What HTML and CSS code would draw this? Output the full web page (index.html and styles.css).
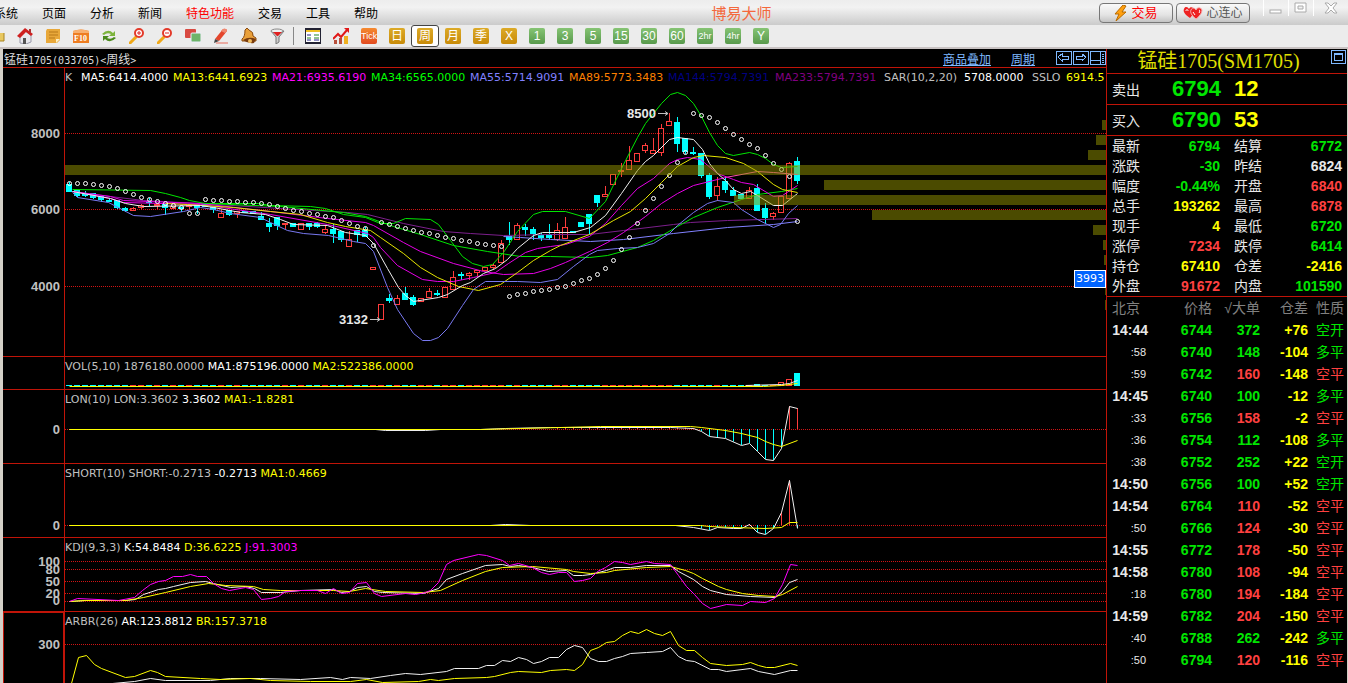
FILE: index.html
```html
<!DOCTYPE html>
<html lang="zh-CN">
<head>
  <meta charset="utf-8">
  <title>博易大师</title>
  <link rel="stylesheet" href="styles.css">
</head>
<body>
  <header class="menubar">
    <nav class="menu">
      <a href="#">系统</a>
      <a href="#">页面</a>
      <a href="#">分析</a>
      <a href="#">新闻</a>
      <a href="#" class="hot">特色功能</a>
      <a href="#">交易</a>
      <a href="#">工具</a>
      <a href="#">帮助</a>
    </nav>
    <h1 class="brand">博易大师</h1>
    <button type="button" class="pill trade">
      <svg width="14" height="16" viewBox="0 0 14 16"><path d="M9 0L1 9h4l-3 7 10-9H8l4-6z" fill="#ffa010" stroke="#b86a00"/></svg>交易
    </button>
    <button type="button" class="pill heart">
      <svg width="20" height="14" viewBox="0 0 20 14"><path d="M7 12C1 8 0 5 1 3c1-3 4-2 5 0 1-3 5-2 5 1 0 3-2 6-4 8z" fill="#e22"/><path d="M13 13C8 9 7 6 8 4c1-3 4-2 5 0 1-3 5-3 6 0 0 3-3 7-6 9z" fill="#e22" stroke="#f6b0b0"/><path d="M3 5c0-2 2-2 2 0M16 4c1 0 1 2 0 3M10 6l2 3" fill="none" stroke="#fff"/></svg>心连心
    </button>
    <div class="window-buttons">
      <button type="button" aria-label="最小化"><svg width="14" height="12" viewBox="0 0 14 12"><rect x="1" y="8" width="11" height="3" fill="#fff" stroke="#aaa"/></svg></button>
      <button type="button" aria-label="最大化"><svg width="14" height="12" viewBox="0 0 14 12"><path d="M1 1h11v9H1zM4 4h5v3H4z" fill="#fff" stroke="#aaa" fill-rule="evenodd"/></svg></button>
      <button type="button" aria-label="关闭"><svg width="14" height="12" viewBox="0 0 14 12"><path d="M1 1h3l3 3 3-3h3L9 6l4 5h-3L7 8l-3 3H1l4-5z" fill="#fff" stroke="#aaa"/></svg></button>
    </div>
  </header>

  <div class="toolbar">
    <button type="button" class="tool cut" aria-label="返回"><svg width="5" height="16" viewBox="0 0 5 16"><path d="M0 5h4v8H0z" fill="#e8c860"/><path d="M4 5v8H0" fill="none" stroke="#a88420"/></svg></button>
    <button type="button" class="tool" aria-label="首页"><svg width="16" height="16" viewBox="0 0 16 16"><path d="M3 8v7l6 1 5-2V7L8 3z" fill="#e9e9ee" stroke="#99a"/><path d="M0 8L8 0l8 6-2 2-5-4-6 6z" fill="#cf2020"/><path d="M12 1h2v4l-2-1z" fill="#a33"/><path d="M6 10h3v6H6z" fill="#555"/></svg></button>
    <button type="button" class="tool" aria-label="公告"><svg width="16" height="16" viewBox="0 0 16 16"><path d="M2 1h13v11l-3 3H1V3z" fill="#e8a83a"/><path d="M4 4h9M4 7h9M4 10h6" stroke="#b87818"/><path d="M15 11h-4v4z" fill="#fff0c0"/></svg></button>
    <button type="button" class="tool" aria-label="F10"><svg width="16" height="16" viewBox="0 0 16 16"><path d="M0 3q8-3 16 0v12H0z" fill="#ee7d22"/><path d="M0 3q8-3 16 0v2H0z" fill="#f8b070"/><text x="1" y="13" class="ico-text">F10</text></svg></button>
    <button type="button" class="tool" aria-label="刷新"><svg width="16" height="16" viewBox="0 0 16 16"><path d="M1 6q6-6 11-1l2-2v5H8l2-2Q6 4 3 7z" fill="#7cb43c"/><path d="M15 10q-6 6-11 1l-2 2V8h6l-2 2q4 2 7-1z" fill="#4b8a1c"/></svg></button>
    <button type="button" class="tool" aria-label="放大"><svg width="16" height="16" viewBox="0 0 16 16"><path d="M1 15l6-6" stroke="#f0a818" stroke-width="3" stroke-linecap="round"/><circle cx="10" cy="5" r="4" fill="#fff" stroke="#e33a2a" stroke-width="2"/><path d="M8 5h4M10 3v4" stroke="#d22"/></svg></button>
    <button type="button" class="tool" aria-label="缩小"><svg width="16" height="16" viewBox="0 0 16 16"><path d="M1 15l6-6" stroke="#f0a818" stroke-width="3" stroke-linecap="round"/><circle cx="10" cy="5" r="4" fill="#fff" stroke="#e33a2a" stroke-width="2"/><path d="M8 5h4" stroke="#d22"/></svg></button>
    <button type="button" class="tool" aria-label="叠加"><svg width="16" height="16" viewBox="0 0 16 16"><rect x="0" y="1" width="11" height="9" rx="1" fill="#d84a42"/><rect x="6" y="5" width="10" height="9" rx="1" fill="#6db46a" stroke="#eef"/></svg></button>
    <button type="button" class="tool" aria-label="画线"><svg width="16" height="16" viewBox="0 0 16 16"><path d="M2 11L10 1q4-1 4 2L6 13z" fill="#e4452c"/><path d="M10 1q4-1 4 2l-2 2-4-2z" fill="#f08870"/><path d="M2 11l4 2-5 2z" fill="#444"/><path d="M3 15h12" stroke="#e86a5a"/></svg></button>
    <button type="button" class="tool" aria-label="预警"><svg width="16" height="16" viewBox="0 0 16 16"><path d="M4 2l2-2 2 2q5 2 4 6l3 2v3L1 13v-2q3-2 3-9z" fill="#e9a03a" stroke="#8a4a10"/><path d="M2 12q6-4 13-1l-2 4q-6 1-11-3z" fill="#7a3d10"/><circle cx="9" cy="13" r="2" fill="#f4c060"/></svg></button>
    <button type="button" class="tool" aria-label="筛选"><svg width="16" height="16" viewBox="0 0 16 16"><path d="M2 3l5 6v7l3-2V9l5-6z" fill="#ccc" stroke="#777"/><ellipse cx="8" cy="3" rx="6" ry="2" fill="#eee" stroke="#888"/><path d="M4 4h9L9 8H8z" fill="#e02020"/></svg></button>
    <span class="tool-sep"></span>
    <button type="button" class="tool" aria-label="报价"><svg width="16" height="16" viewBox="0 0 16 16"><path d="M0 1h16v14H0z" fill="#fff" stroke="#223" stroke-width="2"/><path d="M1 3h14" stroke="#f0c020" stroke-width="2"/><path d="M2 7h4M2 12h4M9 12h5" stroke="#228" /><path d="M9 7h5M2 10h4M9 10h5" stroke="#282"/></svg></button>
    <button type="button" class="tool" aria-label="走势"><svg width="16" height="16" viewBox="0 0 16 16"><path d="M1 12h3v4H1zM6 10h3v6H6z" fill="#b8503c"/><path d="M11 8h4v8h-4z" fill="#f0b020"/><path d="M0 11l5-5 3 3 6-7" fill="none" stroke="#e01818" stroke-width="2"/><path d="M11 0h5v5z" fill="#e01818"/></svg></button>
    <button type="button" class="tool"><span class="chip tick">Tick</span></button>
    <button type="button" class="tool"><span class="chip gold">日</span></button>
    <button type="button" class="tool active"><span class="chip gold">周</span></button>
    <button type="button" class="tool"><span class="chip gold">月</span></button>
    <button type="button" class="tool"><span class="chip gold">季</span></button>
    <button type="button" class="tool"><span class="chip gold">X</span></button>
    <button type="button" class="tool"><span class="chip green">1</span></button>
    <button type="button" class="tool"><span class="chip green">3</span></button>
    <button type="button" class="tool"><span class="chip green">5</span></button>
    <button type="button" class="tool"><span class="chip green">15</span></button>
    <button type="button" class="tool"><span class="chip green">30</span></button>
    <button type="button" class="tool"><span class="chip green">60</span></button>
    <button type="button" class="tool"><span class="chip green small">2hr</span></button>
    <button type="button" class="tool"><span class="chip green small">4hr</span></button>
    <button type="button" class="tool"><span class="chip green">Y</span></button>
  </div>

  <main class="workspace">
    <section class="charts">
      <div class="chart-title">
        <h2>锰硅<span class="half">1705(033705)&lt;</span>周线<span class="half">&gt;</span></h2>
        <a href="#">商品叠加</a>
        <a href="#">周期</a>
        <div class="view-buttons">
          <button type="button" aria-label="左移"><svg width="17" height="16" viewBox="0 0 17 16"><path d="M1 1h15v13H1zM7 4L3 7l4 4V9h6V6H7z"/></svg></button>
          <button type="button" aria-label="右移"><svg width="17" height="16" viewBox="0 0 17 16"><path d="M1 1h15v13H1zM10 4l4 3-4 4V9H4V6h6z"/></svg></button>
          <button type="button" aria-label="布局"><svg width="17" height="16" viewBox="0 0 17 16"><path d="M1 1h15v13H1zM11 1v13M1 10h10M13 4h2M13 6h2M13 8h2M13 10h2M13 12h2"/></svg></button>
        </div>
      </div>

      <div class="panel panel-k">
        <svg class="plot" id="k"></svg>
        <div class="profile" id="profile"></div>
        <div class="legend legend-k">
          <span>K</span><span class="white">MA5:6414.4000</span><span class="yellow">MA13:6441.6923</span><span class="magenta">MA21:6935.6190</span><span class="lime">MA34:6565.0000</span><span class="blue">MA55:5714.9091</span><span class="orange">MA89:5773.3483</span><span class="navy">MA144:5794.7391</span><span class="purple">MA233:5794.7391</span><span>SAR(10,2,20)</span><span class="white">5708.0000</span><span>SSLO</span><span class="yellow">6914.5</span>
        </div>
        <span class="price-tag">3993</span>
      </div>
      <div class="panel panel-vol">
        <svg class="plot" id="vol"></svg>
        <div class="legend"><span>VOL(5,10) 1876180.0000</span> <span class="white">MA1:875196.0000</span> <span class="yellow">MA2:522386.0000</span></div>
      </div>
      <div class="panel panel-mid">
        <svg class="plot" id="lon"></svg>
        <div class="legend"><span>LON(10) LON:3.3602</span> <span class="white">3.3602</span> <span class="yellow">MA1:-1.8281</span></div>
      </div>
      <div class="panel panel-mid">
        <svg class="plot" id="short"></svg>
        <div class="legend"><span>SHORT(10) SHORT:-0.2713</span> <span class="white">-0.2713</span> <span class="yellow">MA1:0.4669</span></div>
      </div>
      <div class="panel panel-mid">
        <svg class="plot" id="kdj"></svg>
        <div class="legend"><span>KDJ(9,3,3)</span> <span class="white">K:54.8484</span> <span class="yellow">D:36.6225</span> <span class="magenta">J:91.3003</span></div>
      </div>
      <div class="panel panel-last">
        <svg class="plot" id="arbr"></svg>
        <div class="legend"><span>ARBR(26)</span> <span class="white">AR:123.8812</span> <span class="yellow">BR:157.3718</span></div>
      </div>
    </section>

    <aside class="quote">
      <div class="quote-title">
        <h2>锰硅1705(SM1705)</h2>
        <button type="button" aria-label="还原"><svg width="17" height="16" viewBox="0 0 17 16"><path d="M1 1h14v13H1zM4 4h8v7H4zM4 5h8"/></svg></button>
      </div>
      <div class="best"><span>卖出</span><b class="up">6794</b><b class="yellow">12</b></div>
      <div class="best"><span>买入</span><b class="up">6790</b><b class="yellow">53</b></div>
      <table class="facts">
        <tr><th>最新</th><td class="up">6794</td><th>结算</th><td class="up">6772</td></tr>
        <tr><th>涨跌</th><td class="up">-30</td><th>昨结</th><td>6824</td></tr>
        <tr><th>幅度</th><td class="up">-0.44%</td><th>开盘</th><td class="red">6840</td></tr>
        <tr><th>总手</th><td class="yellow">193262</td><th>最高</th><td class="red">6878</td></tr>
        <tr><th>现手</th><td class="yellow">4</td><th>最低</th><td class="up">6720</td></tr>
        <tr><th>涨停</th><td class="red">7234</td><th>跌停</th><td class="up">6414</td></tr>
        <tr><th>持仓</th><td class="yellow">67410</td><th>仓差</th><td class="yellow">-2416</td></tr>
        <tr><th>外盘</th><td class="red">91672</td><th>内盘</th><td class="up">101590</td></tr>
      </table>
      <table class="ticks">
        <colgroup><col class="c-time"><col class="c-price"><col class="c-vol"><col class="c-diff"><col></colgroup>
        <thead><tr><th>北京</th><th>价格</th><th>√大单</th><th>仓差</th><th>性质</th></tr></thead>
        <tbody>
          <tr><td>14:44</td><td class="up">6744</td><td class="up">372</td><td class="yellow">+76</td><td class="up">空开</td></tr>
          <tr><td class="sec">:58</td><td class="up">6740</td><td class="up">148</td><td class="yellow">-104</td><td class="up">多平</td></tr>
          <tr><td class="sec">:59</td><td class="up">6742</td><td class="red">160</td><td class="yellow">-148</td><td class="red">空平</td></tr>
          <tr><td>14:45</td><td class="up">6740</td><td class="up">100</td><td class="yellow">-12</td><td class="up">多平</td></tr>
          <tr><td class="sec">:33</td><td class="up">6756</td><td class="red">158</td><td class="yellow">-2</td><td class="red">空平</td></tr>
          <tr><td class="sec">:36</td><td class="up">6754</td><td class="up">112</td><td class="yellow">-108</td><td class="up">多平</td></tr>
          <tr><td class="sec">:38</td><td class="up">6752</td><td class="up">252</td><td class="yellow">+22</td><td class="up">空开</td></tr>
          <tr><td>14:50</td><td class="up">6756</td><td class="up">100</td><td class="yellow">+52</td><td class="up">空开</td></tr>
          <tr><td>14:54</td><td class="up">6764</td><td class="red">110</td><td class="yellow">-52</td><td class="red">空平</td></tr>
          <tr><td class="sec">:50</td><td class="up">6766</td><td class="red">124</td><td class="yellow">-30</td><td class="red">空平</td></tr>
          <tr><td>14:55</td><td class="up">6772</td><td class="red">178</td><td class="yellow">-50</td><td class="red">空平</td></tr>
          <tr><td>14:58</td><td class="up">6780</td><td class="red">108</td><td class="yellow">-94</td><td class="red">空平</td></tr>
          <tr><td class="sec">:18</td><td class="up">6780</td><td class="red">194</td><td class="yellow">-184</td><td class="red">空平</td></tr>
          <tr><td>14:59</td><td class="up">6782</td><td class="red">204</td><td class="yellow">-150</td><td class="red">空平</td></tr>
          <tr><td class="sec">:40</td><td class="up">6788</td><td class="up">262</td><td class="yellow">-242</td><td class="up">多平</td></tr>
          <tr><td class="sec">:50</td><td class="up">6794</td><td class="red">120</td><td class="yellow">-116</td><td class="red">空平</td></tr>
        </tbody>
      </table>
    </aside>
  </main>
  <script src="charts.js"></script>
</body>
</html>
```

FILE: styles.css
```css
* {
  box-sizing: border-box;
}
body {
  margin: 0;
  height: 100vh;
  overflow: hidden;
  display: flex;
  flex-direction: column;
  background: #d4d0c8;
  color: #e8e8e8;
  font-family: "DejaVu Sans", "Noto Sans", "Noto Sans CJK SC", sans-serif;
  font-size: 11px;
}
button {
  margin: 0;
  padding: 0;
  border: 0;
  background: none;
  font: inherit;
  color: inherit;
}
h1, h2 {
  margin: 0;
  font-weight: normal;
}
svg {
  display: block;
}

/* menu bar */
.menubar {
  height: 25px;
  flex: none;
  display: flex;
  align-items: center;
  background: linear-gradient(#ededed, #f2f2f2 30%, #cbcbcb);
  font-family: "Liberation Sans", "Noto Sans CJK SC", sans-serif;
  font-size: 12px;
}
.menu {
  display: flex;
  gap: 24px;
  margin-left: -6px;
}
.menu a {
  color: #000;
  text-decoration: none;
}
.menu a.hot {
  color: #f00;
}
.brand {
  flex: 1;
  padding-left: 6px;
  text-align: center;
  font-size: 15px;
  color: #f4683c;
}
.pill {
  width: 74px;
  height: 20px;
  margin-right: 3px;
  display: flex;
  align-items: center;
  justify-content: center;
  gap: 3px;
  border: 1px solid #777;
  border-radius: 4px;
  background: linear-gradient(#fafafa, #e4e4e4 60%, #c4c4c4);
  line-height: 18px;
}
.trade {
  color: #f00;
  font-size: 13px;
}
.heart {
  color: #555;
}
.window-buttons {
  display: flex;
  align-self: flex-start;
  margin-left: 10px;
}
.window-buttons button {
  width: 25px;
  height: 16px;
  border-left: 1px solid #fff;
  display: flex;
  align-items: center;
  justify-content: center;
}
.window-buttons button:last-child {
  width: 35px;
}

/* toolbar */
.toolbar {
  height: 24px;
  flex: none;
  display: flex;
  align-items: center;
  background: #ececec;
  border-bottom: 2px solid #c8c2c2;
}
.tool {
  width: 28px;
  height: 22px;
  display: flex;
  align-items: center;
  justify-content: center;
}
.tool.cut {
  width: 11px;
  justify-content: flex-start;
}
.tool.active {
  border: 1px solid #444;
  border-radius: 3px;
  background: #fff;
}
.tool-sep {
  width: 8px;
  height: 18px;
  background: linear-gradient(90deg, transparent 2px, #888 2px, #888 3px, transparent 3px);
}
.ico-text {
  font: bold 8px "Liberation Serif", serif;
  fill: #fff;
}
.chip {
  width: 16px;
  height: 16px;
  border-radius: 2px;
  color: #fff;
  font: 12px/16px "Liberation Sans", "Noto Sans CJK SC", sans-serif;
  text-align: center;
  white-space: nowrap;
}
.gold {
  background: linear-gradient(#dcaa28, #c88a08);
}
.green {
  background: linear-gradient(#86c474, #58994c);
}
.tick {
  background: linear-gradient(#f58a30, #e24a20);
  font-size: 9px;
}
.small {
  font-size: 9px;
}

/* chart column */
.workspace {
  flex: 1;
  min-height: 0;
  display: flex;
  padding: 0 1px 0 3px;
}
.charts {
  flex: 1;
  min-width: 0;
  display: flex;
  flex-direction: column;
  background: #000;
}
.chart-title {
  height: 19px;
  flex: none;
  display: flex;
  align-items: center;
  padding-left: 1px;
  border-bottom: 1px solid #c01408;
  font-size: 12px;
}
.chart-title h2 {
  flex: 1;
  font-size: 12px;
  color: #ddd;
}
.chart-title a {
  margin-right: 20px;
  color: #7fb9ff;
}
.half {
  font-family: "DejaVu Sans Mono", monospace;
  font-size: 10px;
}
.view-buttons {
  display: flex;
}
.view-buttons path,
.quote-title path {
  fill: none;
  stroke: #7fb9ff;
  shape-rendering: crispEdges;
}
.panel {
  position: relative;
  flex: none;
  border-bottom: 1px solid #c01408;
  overflow: hidden;
}
.panel-k {
  height: 289px;
}
.panel-vol {
  height: 33px;
}
.panel-mid {
  height: 74px;
}
.panel-last {
  flex: 1;
  border-bottom: 0;
}
.plot {
  position: absolute;
  inset: 0;
  width: 100%;
  height: 100%;
}
.plot text {
  font: bold 13px "Liberation Sans", sans-serif;
  fill: #c0c0c0;
  text-anchor: end;
}
.plot .note {
  fill: #e8e8e8;
}
.plot .grid {
  stroke: #d01414;
  stroke-dasharray: 1 1;
  shape-rendering: crispEdges;
}
.plot .axis {
  stroke: #c01408;
  shape-rendering: crispEdges;
}
.legend {
  position: relative;
  padding-left: 62px;
  height: 20px;
  line-height: 20px;
  color: #c0c0c0;
  white-space: nowrap;
}
.legend-k {
  display: grid;
  grid-template-columns: 16px 92px 99px 99px 99px 99px 99px 107px 109px 80px 68px 34px 1fr;
}
.profile {
  position: absolute;
  top: 52px;
  right: 0;
  display: flex;
  flex-direction: column;
  align-items: flex-end;
  gap: 5px;
}
.profile div {
  height: 10px;
  background: rgba(150, 150, 0, 0.5);
}
.price-tag {
  position: absolute;
  right: 0;
  top: 202px;
  width: 32px;
  height: 18px;
  border: 1px solid #fff;
  background: #0064ff;
  color: #fff;
  line-height: 16px;
  text-align: center;
}

/* quote column */
.quote {
  flex: none;
  width: 241px;
  border-left: 1px solid #c01408;
  background: #000;
  font-family: "Liberation Sans", "Noto Sans CJK SC", sans-serif;
  font-size: 14px;
}
.quote-title {
  height: 25px;
  display: flex;
  align-items: flex-start;
  border-bottom: 1px solid #c01408;
}
.quote-title h2 {
  flex: 1;
  text-align: center;
  font: 20px/24px "Liberation Serif", "Noto Sans CJK SC", serif;
  color: #e0e000;
}
.best {
  height: 31px;
  display: flex;
  align-items: center;
  padding-left: 5px;
  border-bottom: 1px solid #c01408;
}
.best span {
  width: 60px;
}
.best b {
  width: 62px;
  font-size: 22px;
}
.facts,
.ticks {
  width: 100%;
  table-layout: fixed;
  border-collapse: collapse;
}
.facts {
  border-bottom: 1px solid #c01408;
}
.facts th,
.facts td {
  height: 20px;
  padding: 0;
  line-height: 20px;
}
.facts th {
  width: 54px;
  padding-left: 5px;
  text-align: left;
  font-weight: normal;
}
.facts th:nth-child(3) {
  width: 68px;
  padding-left: 14px;
}
.facts td {
  text-align: right;
  font-weight: bold;
}
.facts td:last-child {
  padding-right: 5px;
}
.ticks th,
.ticks td {
  height: 22px;
  padding: 0;
  line-height: 22px;
  text-align: right;
  font-weight: bold;
}
.ticks th {
  color: #808080;
  font-weight: normal;
}
.ticks th:first-child {
  padding-left: 5px;
  text-align: left;
}
.ticks th:last-child,
.ticks td:last-child {
  padding-right: 3px;
  font-weight: normal;
}
.ticks .sec {
  padding-right: 2px;
  font-size: 11px;
  font-weight: normal;
}
.c-time {
  width: 41px;
}
.c-price {
  width: 64px;
}
.c-vol,
.c-diff {
  width: 48px;
}

.white { color: #fff; }
.yellow { color: #ff0; }
.magenta { color: #f0f; }
.lime { color: #0f0; }
.blue { color: #8080ff; }
.orange { color: #ff8000; }
.navy { color: #000080; }
.purple { color: #800080; }
.up { color: #00e600; }
.red { color: #ff4040; }
```

FILE: charts.js
```javascript
const NS = "http://www.w3.org/2000/svg";
const RED = "#ff3c3c";
const CYAN = "#00ffff";

function el(parent, name, attrs, text) {
  const node = document.createElementNS(NS, name);
  for (const key in attrs) node.setAttribute(key, attrs[key]);
  if (text) node.textContent = text;
  parent.appendChild(node);
  return node;
}

// all series share one coordinate space, each panel shows its own slice of it
function panel(id, top, labels) {
  const svg = document.getElementById(id);
  const g = el(svg, "g", { transform: `translate(-3 ${-top})` });
  for (const [text, y, gridY] of labels) {
    el(g, "text", { x: 60, y: y + 5 }, text);
    if (gridY) el(g, "path", { d: `M65 ${gridY}.5H3000`, class: "grid" });
  }
  el(g, "path", { d: `M64.5 ${top}V2000`, class: "axis" });
  return g;
}

function line(g, color, points) {
  el(g, "polyline", { points, fill: "none", stroke: color, transform: "translate(.5 .5)" });
}

// y of a polyline at x
function at(points, x) {
  const p = points.split(" ").map(s => s.split(",").map(Number));
  for (let i = 1; i < p.length; i++) {
    if (x <= p[i][0]) {
      const t = (x - p[i - 1][0]) / (p[i][0] - p[i - 1][0]);
      return p[i - 1][1] + t * (p[i][1] - p[i - 1][1]);
    }
  }
  return p[p.length - 1][1];
}

// high, body top, body bottom, low, 1 = rising
const candles = [
  [182,184,191,191,0],[190,190,195,196,0],[191,193,195,196,0],[193,193,197,198,0],[196,196,199,201,0],
  [199,200,201,201,0],[200,200,207,208,0],[207,208,210,211,0],[207,208,210,210,1],[204,205,207,208,1],
  [198,201,202,205,0],[204,204,205,208,1],[204,204,207,214,0],[206,206,208,208,1],[207,207,208,211,0],
  [205,205,206,208,1],[205,205,207,213,0],[204,204,206,206,0],[207,207,209,212,0],[210,213,217,217,1],
  [210,210,214,215,0],[211,211,213,217,1],[211,211,212,212,0],[211,211,213,213,0],[212,216,219,219,0],
  [218,223,226,231,0],[217,217,225,229,0],[223,223,224,228,1],[223,223,226,226,0],[223,223,229,229,1],
  [223,223,226,229,0],[222,223,226,227,0],[225,229,232,233,1],[224,229,233,242,0],[231,231,239,241,0],
  [231,239,246,246,1],[230,230,234,241,0],[227,230,236,236,0],[267,267,269,269,1],[304,304,319,319,1],
  [294,298,300,302,0],[295,298,304,304,1],[287,293,299,299,0],[295,297,304,305,0],[298,298,301,301,1],
  [288,291,297,297,1],[290,293,294,295,0],[287,287,297,297,1],[271,277,289,289,1],[272,274,275,279,0],
  [272,273,275,279,1],[270,270,272,275,1],[267,267,270,270,1],[263,265,267,268,1],[240,243,262,262,1],
  [222,236,239,244,0],[223,225,239,239,1],[224,227,229,235,0],[227,229,233,239,0],[233,235,237,240,0],
  [224,234,237,239,0],[223,230,239,240,1],[217,227,238,238,1],[231,231,232,232,0],[222,222,226,226,0],
  [214,214,223,233,0],[195,195,202,206,0],[186,194,196,196,1],[174,174,184,184,1],[163,170,171,176,1],
  [146,160,169,169,1],[153,153,161,161,1],[143,145,150,152,1],[138,150,153,153,1],[124,128,152,155,1],
  [113,121,125,125,1],[117,122,143,151,0],[138,138,151,153,0],[147,152,153,154,0],[153,153,175,177,0],
  [173,175,196,198,0],[177,186,195,200,1],[177,181,189,192,0],[187,190,195,195,0],[194,194,198,198,0],
  [187,190,198,198,1],[184,188,210,210,0],[203,208,217,222,0],[212,213,216,219,1],[196,196,212,212,1],
  [162,163,198,198,1],[157,161,180,183,0]
];

const sar = [183,183,183,184,185,186,188,191,194,197,199,201,203,205,207,213,213,199,200,200,201,201,202,202,203,204,
  206,208,210,211,213,214,216,217,220,223,226,228,245,222,224,226,228,230,232,233,235,237,238,240,241,243,244,245,246,
  296,294,293,291,290,289,287,286,283,280,278,274,268,260,249,237,223,210,198,186,175,162,152,
  113,115,117,122,128,134,139,144,148,155,163,169,176,221];

// --- K line
const k = panel("k", 68, [["8000", 133, 133], ["6000", 209, 209], ["4000", 286, 286]]);
candles.forEach(([high, top, bottom, low, rising], i) => {
  const x = 69 + 8 * i;
  const color = rising ? RED : CYAN;
  const g = el(k, "g", { stroke: color, "shape-rendering": "crispEdges" });
  el(g, "path", { d: `M${x}.5 ${high}V${top}M${x}.5 ${bottom}V${low + 1}` });
  el(g, "rect", { x: x - 2.5, y: top + 0.5, width: 5, height: bottom - top, fill: rising ? "none" : color });
});
line(k, "#7c1f8c", "72,191 110,196 143,200 200,203 280,208 347,212 367,214 403,223 443,231 470,233 503,235 550,234 589,234 623,230 673,224 690,222 727,220 797,218");
line(k, "#8080ff", "503,236 520,237 550,239 590,241 623,239 673,233 727,227 773,224 797,221");
line(k, "#00e600", "205,203 280,206 343,212 365,216 393,226 420,234 453,245 487,251 520,256 550,256 589,257 607,255 637,247 653,240 677,226 693,217 717,207 741,199 757,194 781,191 797,188");
line(k, "#e600e6", "72,191 110,196 123,200 200,203 270,211 327,218 365,222 373,225 403,242 420,251 453,263 483,271 503,274 533,273 550,268 565,262 589,251 607,242 623,232 645,216 661,203 677,193 693,185 725,177");
line(k, "#ff50b0", "725,177 757,171 773,172 797,174");
line(k, "#e600e6", "72,191 110,198 123,202 200,204 270,214 327,224 367,233 373,237 380,247 397,265 422,279 437,281 453,281 473,277 495,272 508,263 525,252 537,248 550,246 565,244 589,236 605,223 621,205 637,188 653,178 669,163 677,159 687,157 700,159 717,173 733,179 741,182 753,184 773,196 782,195 797,185");
line(k, "#e6e600", "165,203 187,204 233,207 270,211 300,214 327,222 345,226 370,230 380,237 403,253 420,267 437,277 458,286 478,290 500,284 517,272 533,260 550,250 560,245 589,234 613,220 630,211 645,198 661,182 677,166 693,157 703,155 725,157 743,163 757,171 773,184 782,189 797,192");
line(k, "#7878f0", "72,192 77,197 108,202 133,215 150,216 183,211 200,207 213,209 230,213 260,217 270,222 287,230 303,233 328,235 353,241 365,243 373,251 387,287 397,309 413,333 422,340 430,340 438,337 447,328 462,305 473,289 485,281 517,281 540,282 557,279 573,266 589,254 597,250 617,248 637,247 653,243 669,233 677,225 693,212 707,203 717,200 733,202 741,209 757,219 773,227 780,224 788,213 797,205");
line(k, "#00e600", "72,189 150,190 165,193 180,197 189,200 205,203 258,203 270,205 310,206 325,208 343,214 365,217 380,223 393,223 405,218 430,219 438,224 450,240 462,256 472,263 483,266 492,264 503,252 517,231 533,214 542,211 565,211 589,218 605,201 621,168 637,137 645,123 661,103 670,94 677,92 685,95 693,103 701,116 709,132 717,145 725,153 733,155 749,152 757,154 765,158 773,164 781,167 797,166");
line(k, "#f0f0f0", "72,191 110,198 125,203 143,206 200,205 213,207 240,212 265,214 280,219 293,224 327,225 345,232 365,235 373,243 387,268 398,287 405,295 413,301 438,297 447,294 462,285 470,282 483,273 495,268 507,259 517,248 533,235 542,232 573,232 590,227 605,215 621,193 637,170 645,161 653,155 669,139 677,137 693,139 702,149 709,163 717,173 725,180 733,189 741,193 750,191 757,195 773,205 782,205 797,193");
sar.forEach((y, i) => {
  el(k, "circle", { cx: 69.5 + 8 * i, cy: y + 0.5, r: 2, fill: "none", stroke: "#fff" });
});
el(k, "text", { x: 656, y: 118, class: "note" }, "8500");
el(k, "text", { x: 368, y: 324, class: "note" }, "3132");
el(k, "path", { d: "M658 113.5h10m-3-2l3 2-3 2M370 319.5h10m-3-2l3 2-3 2", stroke: "#c0c0c0", fill: "none" });

// volume-at-price bars, widths in px
for (const width of [4, 10, 18, 1041, 282, 372, 234, 13, 3, 2, 1, 1, 1]) {
  const bar = document.createElement("div");
  bar.style.width = width + "px";
  document.getElementById("profile").appendChild(bar);
}

// --- VOL
const vol = panel("vol", 357, []);
const volHeights = { 86: 2, 88: 1, 89: 4, 90: 7, 91: 13 };
candles.forEach((c, i) => {
  const x = 66 + 8 * i;
  const h = volHeights[i] || 1;
  if (h > 2 && c[4]) {
    el(vol, "rect", { x: x + 0.5, y: 386.5 - h, width: 5, height: h - 1, fill: "none", stroke: RED });
  } else {
    el(vol, "rect", { x, y: 386 - h, width: 6, height: h, fill: c[4] ? RED : CYAN });
  }
});
line(vol, "#f0f0f0", "745,385 781,384 789,383 797,380");
line(vol, "#ffff00", "69,386 763,386 781,385 797,383");

// --- LON
const lon = panel("lon", 390, [["0", 429, 429]]);
const lonLine = "69,429 375,429 385,430 425,430 440,429 480,429 505,428 550,427 670,427 693,428 701,431 709,436 725,438 741,445 749,443 757,451 765,459 773,460 781,448 789,406 797,408";
for (let x = 557; x <= 797; x += 8) {
  const y = at(lonLine, x);
  el(lon, "path", { d: `M${x}.5 429V${y}`, stroke: y < 429 ? RED : CYAN });
}
line(lon, "#f0f0f0", lonLine);
line(lon, "#ffff00", "69,429 480,429 520,428 560,427 600,426 690,426 701,427 725,430 741,433 757,437 765,441 773,444 781,446 797,440");

// --- SHORT
const short = panel("short", 464, [["0", 525, 525]]);
const shortLine = "69,525 490,525 505,524 530,525 675,525 693,527 709,530 717,527 733,528 741,528 749,524 757,532 765,534 773,528 781,512 789,480 797,528";
for (let x = 701; x <= 797; x += 8) {
  const y = at(shortLine, x);
  el(short, "path", { d: `M${x}.5 525V${y}`, stroke: y < 525 ? RED : CYAN });
}
line(short, "#f0f0f0", shortLine);
line(short, "#ffff00", "69,525 700,525 709,526 733,527 765,528 781,527 789,522 797,522");

// --- KDJ
const kdj = panel("kdj", 538, [["100", 561, 561], ["80", 569, 569], ["50", 581, 581], ["20", 593, 593], ["0", 600, 601]]);
line(kdj, "#f0f0f0", "69,601 85,600 125,600 135,599 143,594 158,589 165,588 173,586 190,582 205,581 213,583 230,587 245,586 254,588 261,592 280,592 300,590 333,589 341,592 349,591 357,587 366,586 374,591 382,592 423,593 438,588 446,579 462,573 485,565 502,564 510,566 518,565 532,567 540,569 548,571 566,570 573,575 582,575 590,574 606,570 614,567 630,567 646,565 670,565 678,571 693,579 702,586 710,590 726,594 750,596 775,597 782,591 789,582 797,579");
line(kdj, "#ffff00", "69,601 85,600 125,600 143,597 165,592 190,586 208,583 225,585 253,586 263,589 280,590 333,590 349,591 365,588 385,591 423,592 440,590 462,580 485,571 502,567 532,566 566,569 573,571 590,573 606,572 614,570 646,567 670,566 685,570 693,573 702,578 718,586 726,589 742,593 758,595 775,596 782,594 797,586");
line(kdj, "#ff00ff", "69,601 77,598 118,600 134,597 142,590 150,584 158,581 165,580 173,576 182,576 190,574 197,576 206,576 213,583 221,588 229,590 245,587 253,589 261,599 270,598 278,596 285,591 300,590 317,590 325,593 333,588 341,593 349,592 357,583 366,582 374,593 381,596 405,593 415,594 425,592 430,590 438,582 446,564 453,560 478,554 486,555 502,560 509,565 518,563 532,567 541,572 549,574 558,572 566,572 574,581 582,580 590,578 597,571 605,567 614,561 622,562 630,564 646,561 654,563 670,564 678,575 686,586 694,594 702,603 710,608 726,604 742,605 750,601 765,602 774,598 782,584 790,564 797,565");

// --- ARBR
const arbr = panel("arbr", 612, [["300", 644, 644]]);
el(arbr, "path", { d: "M3 612.5H64M3.5 612V2000M63.5 612V2000", class: "axis" });
line(arbr, "#f0f0f0", "112,683 134,681 150,678 165,680 210,680 230,678 260,678 300,679 330,677 342,679 350,677 370,678 390,675 405,673 420,674 446,671 454,668 478,668 486,665 494,665 502,660 510,661 518,657 526,659 533,663 541,661 549,657 558,657 566,649 574,645 582,647 590,658 598,661 606,661 614,658 622,656 630,653 646,652 662,651 670,647 678,656 686,660 694,661 710,669 718,669 726,671 750,668 758,671 774,674 790,670 797,670");
line(arbr, "#ffff00", "71,683 78,657 86,655 94,664 101,668 125,677 134,676 150,670 157,672 165,676 200,678 220,679 250,678 270,680 310,681 350,681 366,679 382,682 418,681 430,679 438,680 454,678 486,677 494,676 510,672 518,671 541,672 550,670 566,669 574,670 582,664 590,650 598,647 606,642 614,641 622,635 630,631 638,633 646,629 654,633 662,635 670,631 678,645 686,650 694,650 702,657 710,663 726,665 742,664 750,662 758,665 766,667 774,667 790,663 797,665");
```
